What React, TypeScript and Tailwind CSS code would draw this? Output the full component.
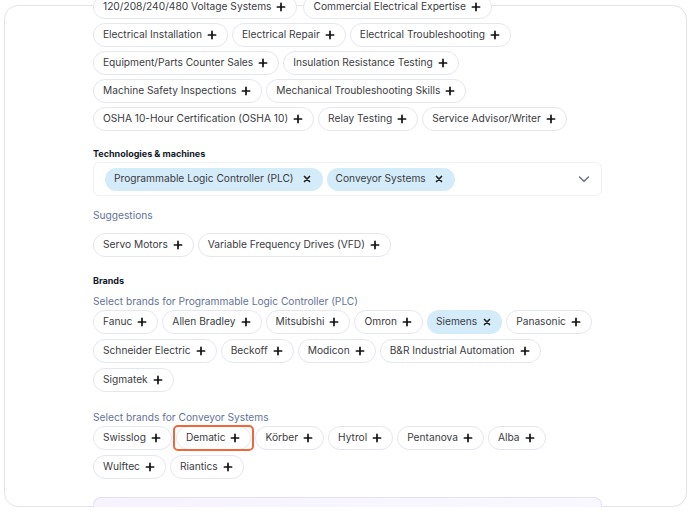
import React from "react";

const Plus = () => (
  <svg width="12" height="12" viewBox="0 0 12 12" className="shrink-0">
    <path d="M6 2.4V9.6M2.4 6H9.6" stroke="#111" strokeWidth="1.7" strokeLinecap="round" />
  </svg>
);

const Cross = () => (
  <svg width="12" height="12" viewBox="0 0 12 12" className="shrink-0">
    <path d="M3.5 3.5L8.5 8.5M8.5 3.5L3.5 8.5" stroke="#222" strokeWidth="1.7" strokeLinecap="round" />
  </svg>
);

const Chip = ({ label, highlight }: { label: string; highlight?: boolean }) => (
  <div className="relative">
    <div className="flex h-[24px] items-center gap-[4px] rounded-full border border-[#e4e7f0] bg-white pl-[9px] pr-[9px] text-[10.2px] text-[#3b3b3f]">
      <span className="whitespace-nowrap">{label}</span>
      <Plus />
    </div>
    {highlight && (
      <div className="pointer-events-none absolute -inset-x-[3px] -inset-y-[1px] rounded-[5px] border-2 border-[#f0673d]" />
    )}
  </div>
);

const Selected = ({ label, compact }: { label: string; compact?: boolean }) => (
  <div
    className={
      compact
        ? "flex h-[24px] items-center gap-[4px] rounded-full bg-[#d4ebfa] pl-[9px] pr-[9px] text-[10.2px] text-[#3b3b3f]"
        : "flex h-[23px] items-center gap-[7px] rounded-full bg-[#d4ebfa] pl-[9px] pr-[10px] text-[10.2px] text-[#3b3b3f]"
    }
  >
    <span className="whitespace-nowrap">{label}</span>
    <Cross />
  </div>
);

const Row = ({ items, gap = "gap-[4px]" }: { items: string[]; gap?: string }) => (
  <div className={`flex ${gap}`}>
    {items.map((it) => (
      <Chip key={it} label={it} />
    ))}
  </div>
);

export default function App() {
  return (
    <div className="h-[511px] w-[692px] overflow-hidden bg-white pl-[4px] pr-[5px] pt-[5px]" style={{ fontFamily: "Inter, 'Noto Sans', sans-serif" }}>
      <div className="h-[502px] rounded-[14px] border border-[#e3e3ea] bg-white">
        <div className="-mt-[11px] ml-[88px] flex w-[509px] flex-col">
          <div className="flex flex-col gap-[4px]">
            <Row items={["120/208/240/480 Voltage Systems", "Commercial Electrical Expertise"]} gap="gap-[6px]" />
            <Row items={["Electrical Installation", "Electrical Repair", "Electrical Troubleshooting"]} />
            <Row items={["Equipment/Parts Counter Sales", "Insulation Resistance Testing"]} />
            <Row items={["Machine Safety Inspections", "Mechanical Troubleshooting Skills"]} />
            <Row items={["OSHA 10-Hour Certification (OSHA 10)", "Relay Testing", "Service Advisor/Writer"]} />
          </div>

          <div className="mt-[17px] h-[12px] text-[9px] font-bold leading-[12px] text-[#111827]">Technologies &amp; machines</div>
          <div className="mt-[2px] flex h-[34px] items-center justify-between rounded-[6px] border border-[#f0f1f5] pl-[11px] pr-[10px]">
            <div className="flex gap-[4px]">
              <Selected label="Programmable Logic Controller (PLC)" />
              <Selected label="Conveyor Systems" />
            </div>
            <svg width="14" height="14" viewBox="0 0 14 14">
              <path d="M2.5 5L7 9.3L11.5 5" stroke="#6b7280" strokeWidth="1.5" fill="none" strokeLinecap="round" strokeLinejoin="round" />
            </svg>
          </div>

          <div className="mt-[12px] h-[14px] text-[10.2px] leading-[14px] text-[#63739a]">Suggestions</div>
          <div className="mt-[11px]">
            <Row items={["Servo Motors", "Variable Frequency Drives (VFD)"]} />
          </div>

          <div className="mt-[18px] h-[12px] text-[9px] font-bold leading-[12px] text-[#111827]">Brands</div>
          <div className="mt-[7px] h-[14px] text-[10.2px] leading-[14px] text-[#63739a]">Select brands for Programmable Logic Controller (PLC)</div>
          <div className="mt-[2px] flex flex-col gap-[5px]">
            <div className="flex gap-[4px]">
              <Chip label="Fanuc" />
              <Chip label="Allen Bradley" />
              <Chip label="Mitsubishi" />
              <Chip label="Omron" />
              <Selected label="Siemens" compact />
              <Chip label="Panasonic" />
            </div>
            <Row items={["Schneider Electric", "Beckoff", "Modicon", "B&R Industrial Automation"]} />
            <Row items={["Sigmatek"]} />
          </div>

          <div className="mt-[18px] h-[14px] text-[10.2px] leading-[14px] text-[#63739a]">Select brands for Conveyor Systems</div>
          <div className="mt-[2px] flex flex-col gap-[5px]">
            <div className="flex gap-[4px]">
              <Chip label="Swisslog" />
              <Chip label="Dematic" highlight />
              <Chip label="Körber" />
              <Chip label="Hytrol" />
              <Chip label="Pentanova" />
              <Chip label="Alba" />
            </div>
            <Row items={["Wulftec", "Riantics"]} />
          </div>

          <div className="mt-[18px] h-[10px] rounded-t-[8px] border-x border-t border-[#e6e0fb] bg-gradient-to-r from-[#f6f3ff] to-[#f9f7ff]" />
        </div>
      </div>
    </div>
  );
}
